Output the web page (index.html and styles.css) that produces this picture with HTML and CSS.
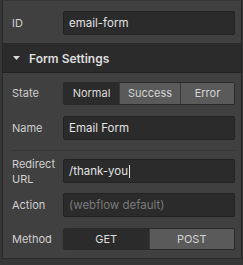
FILE: index.html
```html
<html>
	<head>
		<meta charset="utf8"/>
		<title>Form Settings</title>
		<link rel="stylesheet" href="styles.css">
	</head>
	<body>
		<div class="panel">
			<div class="section top">
				<div class="row">
					<span class="label">ID</span>
					<div class="input">email-form</div>
				</div>
			</div>

			<div class="header">
				<svg class="caret" width="7" height="4" viewBox="0 0 7 4"><path d="M0 0 L7 0 L3.5 4 Z" fill="#d9d9d9"/></svg>
				<span>Form Settings</span>
			</div>

			<div class="section">
				<div class="row">
					<span class="label">State</span>
					<div class="segmented">
						<span class="seg active normal">Normal</span>
						<span class="seg success">Success</span>
						<span class="seg error">Error</span>
					</div>
				</div>
				<div class="row name">
					<span class="label">Name</span>
					<div class="input">Email Form</div>
				</div>
				<div class="divider"></div>
				<div class="row redirect">
					<span class="label two">Redirect<br>URL</span>
					<div class="input">/thank-you<span class="cursor"></span></div>
				</div>
				<div class="row">
					<span class="label">Action</span>
					<div class="input placeholder">(webflow default)</div>
				</div>
				<div class="row method">
					<span class="label">Method</span>
					<div class="segmented">
						<span class="seg active half">GET</span>
						<span class="seg half">POST</span>
					</div>
				</div>
			</div>
		</div>
	</body>
</html>
```

FILE: styles.css
```css
* {
	box-sizing : border-box;
}

html, body {
	height : 100%;
}

body {
	margin      : 0;
	background  : #363636;
	font-family : Inter, 'Open Sans', sans-serif;
	font-size   : 11px;
	color       : #d6d6d6;
}

.panel {
	margin-left  : 2px;
	width        : 240px;
	border-left  : 1px solid #262626;
	border-right : 1px solid #262626;
	background   : #404040;
	border-top   : 1px solid #383838;
	padding-top  : 2px;
}

.section {
	padding       : 8px 6px 8px 9px;
	border-bottom : 1px solid #2a2a2a;
}

.row {
	display     : flex;
	align-items : center;
	height      : 24px;
	margin-top  : 10px;
}

.section .row:first-child {
	margin-top : 0;
}

.label {
	width       : 51px;
	flex-shrink : 0;
	color       : #cfcfcf;
}

.label.two {
	line-height : 15px;
	padding-top : 2px;
}

.input {
	flex          : 1;
	height        : 24px;
	line-height   : 22px;
	padding       : 0 5px;
	background    : #2b2b2b;
	border        : 1px solid #232323;
	border-radius : 2px;
	color         : #e2e2e2;
	font-size     : 11.5px;
}

.input.placeholder {
	color : #7a7a7a;
}

.cursor {
	display        : inline-block;
	width          : 1px;
	height         : 13px;
	background     : #e6e6e6;
	vertical-align : middle;
	margin-left    : 1px;
}

.header {
	display       : flex;
	align-items   : center;
	height        : 29px;
	padding-left  : 10px;
	background    : #2b2b2b;
	border-bottom : 1px solid #232323;
	font-size     : 12px;
	font-weight   : 600;
	color         : #dedede;
}

.caret {
	margin-right : 9px;
}

.segmented {
	flex          : 1;
	display       : flex;
	height        : 23px;
	border        : 1px solid #2a2a2a;
	border-radius : 2px;
	overflow      : hidden;
}

.seg {
	display         : flex;
	align-items     : center;
	justify-content : center;
	background      : #5a5a5a;
	color           : #d4d4d4;
	border-left     : 1px solid #3a3a3a;
}

.seg:first-child {
	border-left : none;
}

.seg.active {
	background : #2b2b2b;
	color      : #dcdcdc;
}

.normal {
	width : 55px;
}

.success {
	width : 61px;
}

.error {
	flex : 1;
}

.half {
	flex : 1;
}

.row.name {
	margin-top : 11px;
}

.divider {
	height     : 1px;
	margin-top : 10px;
	background : #363636;
}

.row.redirect {
	margin-top : 8px;
}

.row.method {
	margin-top : 11px;
	height     : 22px;
}

.method .segmented {
	height : 22px;
}
```
